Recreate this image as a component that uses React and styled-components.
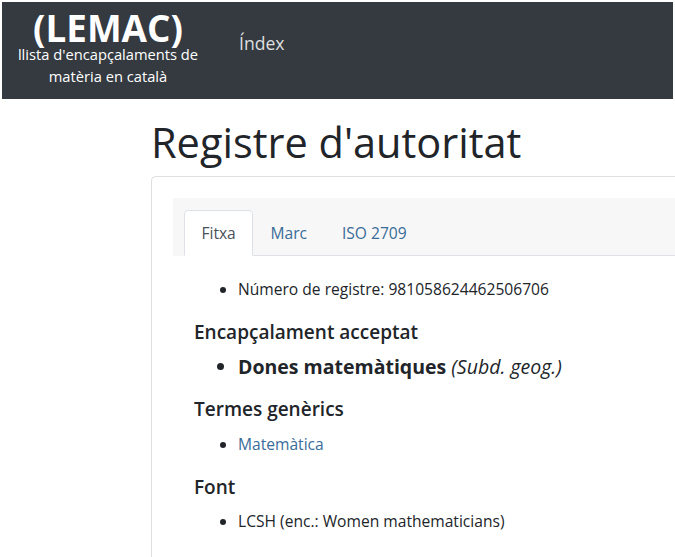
import React from 'react';
import styled, { createGlobalStyle } from 'styled-components';

const Global = createGlobalStyle`
  html, body { margin: 0; padding: 0; background: #fff; overflow: hidden; }
  body { font-family: "Open Sans", "Noto Sans", sans-serif; color: #212529; }
  * { box-sizing: border-box; }
`;

const Page = styled.div`
  width: 675px;
  height: 557px;
  overflow: hidden;
  padding: 2px 2px 0;
`;

const Navbar = styled.nav`
  display: flex;
  align-items: flex-start;
  height: 97px;
  padding-top: 10.5px;
  background: #343a40;
`;

const Brand = styled.a`
  width: 200px;
  margin-left: 6px;
  display: flex;
  flex-direction: column;
  align-items: center;
  color: #fff;
  text-decoration: none;
`;

const BrandTitle = styled.span`
  font-size: 36.8px;
  font-weight: 700;
  line-height: 30.5px;
`;

const BrandSub = styled.span`
  font-size: 14.7px;
  line-height: 22px;
  text-align: center;
`;

const NavLink = styled.a`
  margin-left: 31px;
  margin-top: 17px;
  font-size: 17.6px;
  line-height: 26px;
  color: rgba(255, 255, 255, 0.85);
  text-decoration: none;
`;

const Main = styled.main`
  padding-left: 149px;
`;

const Title = styled.h1`
  margin: 17px 0 7px;
  font-size: 41.5px;
  font-weight: 400;
  line-height: 52.8px;
  white-space: nowrap;
`;

const Card = styled.section`
  width: 700px;
  border: 1px solid rgba(0, 0, 0, 0.125);
  border-radius: 4.4px;
  padding: 21px;
  min-height: 400px;
`;

const CardHeader = styled.div`
  background: #f7f7f7;
  padding: 12px 11px 0;
`;

const Tabs = styled.ul`
  display: flex;
  list-style: none;
  margin: 0;
  padding: 0;
  border-bottom: 1px solid #dee2e6;
`;

const Tab = styled.li`
  margin-bottom: -1px;
  padding: 8.8px 16.4px;
  font-size: 15.6px;
  line-height: 26.4px;
  border: 1px solid ${p => (p.$active ? '#dee2e6' : 'transparent')};
  border-bottom-color: ${p => (p.$active ? '#fff' : 'transparent')};
  border-radius: 4.4px 4.4px 0 0;
  background: ${p => (p.$active ? '#fff' : 'transparent')};
  color: ${p => (p.$active ? '#495057' : '#3a6c98')};
`;

const TabBody = styled.div`
  padding: 21px 21px;
`;

const List = styled.ul`
  margin: 0 0 17.2px;
  padding-left: 44px;
  font-size: ${p => (p.$large ? '19.5px' : '15.6px')};
  line-height: 25.8px;
`;

const SubHead = styled.h5`
  margin: 0 0 8.6px;
  font-size: 19px;
  font-weight: 600;
  line-height: 25.8px;
`;

const Strong = styled.strong`
  font-weight: 700;
`;

const Em = styled.em`
  font-style: italic;
  font-weight: 400;
`;

const Link = styled.a`
  color: #3a6c98;
  text-decoration: none;
`;

export default function App() {
  return (
    <Page>
      <Global />
      <Navbar>
        <Brand href="#">
          <BrandTitle>(LEMAC)</BrandTitle>
          <BrandSub>llista d'encapçalaments de<br />matèria en català</BrandSub>
        </Brand>
        <NavLink href="#">Índex</NavLink>
      </Navbar>
      <Main>
        <Title>Registre d'autoritat</Title>
        <Card>
          <CardHeader>
            <Tabs>
              <Tab $active>Fitxa</Tab>
              <Tab>Marc</Tab>
              <Tab>ISO 2709</Tab>
            </Tabs>
          </CardHeader>
          <TabBody>
            <List>
              <li>Número de registre: 981058624462506706</li>
            </List>
            <SubHead>Encapçalament acceptat</SubHead>
            <List $large>
              <li><Strong>Dones matemàtiques</Strong> <Em>(Subd. geog.)</Em></li>
            </List>
            <SubHead>Termes genèrics</SubHead>
            <List>
              <li><Link href="#">Matemàtica</Link></li>
            </List>
            <SubHead>Font</SubHead>
            <List>
              <li>LCSH (enc.: Women mathematicians)</li>
            </List>
          </TabBody>
        </Card>
      </Main>
    </Page>
  );
}
